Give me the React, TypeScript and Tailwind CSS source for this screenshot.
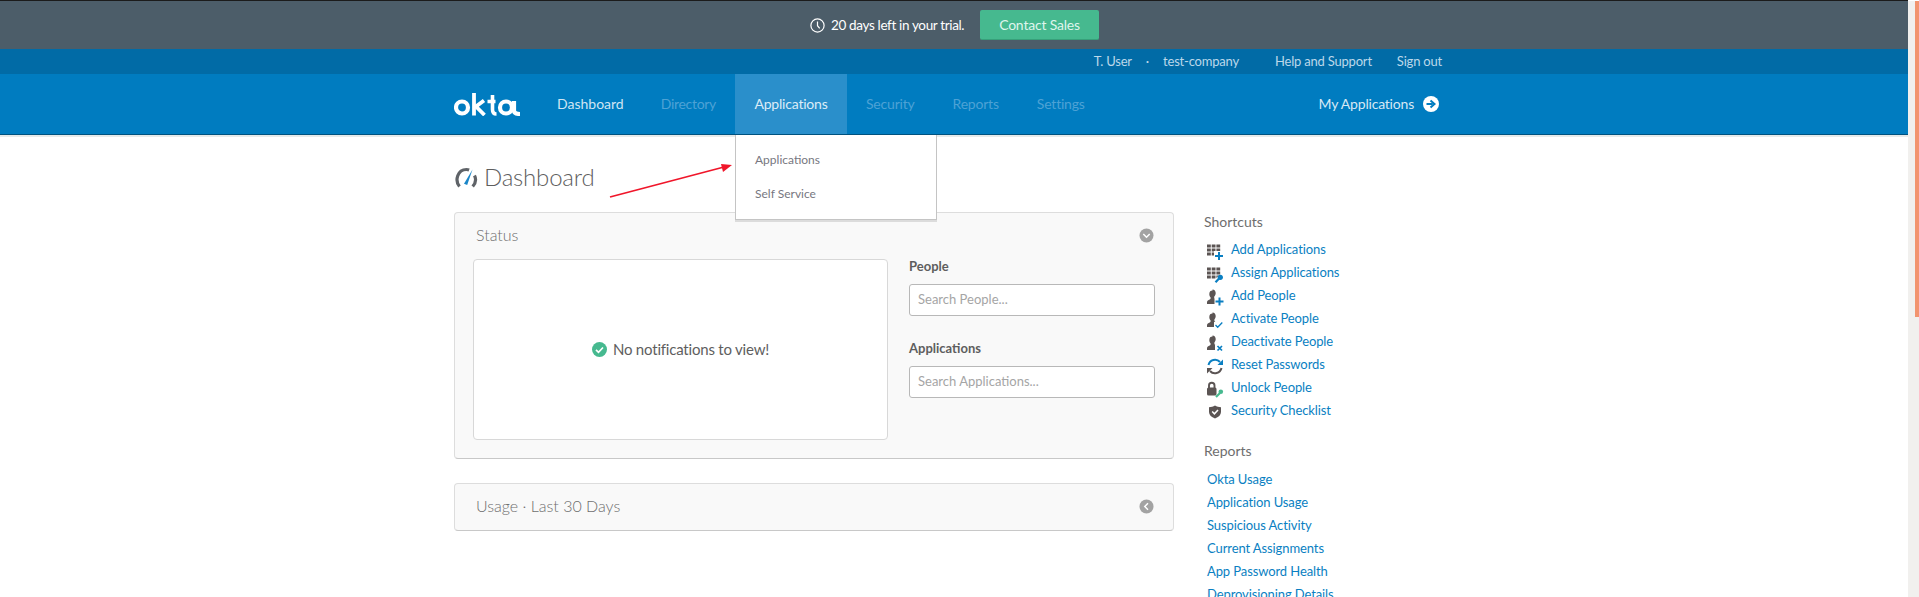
import React from "react";

const font = { fontFamily: '"Lato", "Open Sans", sans-serif' };
const blue = "#0a7fc2";
const dark = "#5b5453";

function Grid() {
  const cells = [];
  for (let r = 0; r < 3; r++) for (let c = 0; c < 3; c++) {
    cells.push(<rect key={r + "-" + c} x={2 + c * 4.7} y={5.5 + r * 4} width={3.8} height={3} fill={dark} />);
  }
  return <>{cells}</>;
}

function Person() {
  return (
    <path d="M7.500 4.500c2 0 3.200 1.500 3.200 3.600 0 1.500-.6 2.600-1.300 3.400v1.200c0 .8.8 1.200 2.600 1.900v4.400H2v-1.800c0-1.600 1.400-2.200 2.700-2.800.6-.3.9-.6.9-1.100v-.7c-.8-.9-1.300-2.100-1.300-3.500 0-2.500 1.300-3.600 3.200-3.600z" fill={dark} />
  );
}

function Plus({ cx, cy }: { cx: number; cy: number }) {
  return (
    <>
      <rect x={cx - 5} y={cy - 5} width={10} height={10} fill="#fff" />
      <rect x={cx - 1} y={cy - 4} width={2} height={8} fill={blue} />
      <rect x={cx - 4} y={cy - 1} width={8} height={2} fill={blue} />
    </>
  );
}

const shortcutIcons: Record<string, React.ReactNode> = {
  add: (<><Grid /><Plus cx={14} cy={17} /></>),
  assign: (
    <>
      <Grid />
      <path d="M9.500 21l-.2-3 5-5 6 4-4 4z" fill="#fff" />
      <path d="M10.500 20.200l4.300-4.500" stroke={blue} strokeWidth="2.200" />
      <circle cx="15.300" cy="15.300" r="2.600" fill={blue} />
    </>
  ),
  addp: (<><Person /><Plus cx={14.500} cy={16.500} /></>),
  activate: (<><Person /><path d="M9 14h10v7H9z" fill="#fff" /><path d="M10.500 17l2.200 2.300 4.600-4.800" stroke={blue} strokeWidth="1.300" fill="none" /></>),
  deactivate: (<><Person /><path d="M10 14h9v7h-9z" fill="#fff" /><path d="M12.500 15l4.500 4.500M17 15l-4.500 4.500" stroke={blue} strokeWidth="1.700" fill="none" /></>),
  reset: (
    <>
      <path d="M3.500 11a6.700 6.700 0 0 1 11.500-3" stroke={blue} strokeWidth="2" fill="none" />
      <path d="M18 5.500v5.500h-5.500z" fill={blue} />
      <path d="M16.500 14a6.700 6.700 0 0 1-11.500 3" stroke={dark} strokeWidth="2" fill="none" />
      <path d="M2 19.500V14h5.500z" fill={dark} />
    </>
  ),
  unlock: (
    <>
      <path d="M4 11V8.500a2.600 2.600 0 0 1 5.500 0V11" stroke={dark} strokeWidth="1.900" fill="none" />
      <rect x="2" y="10.500" width="9.500" height="8" rx="1.500" fill={dark} />
      <path d="M11 20l4-4" stroke="#46b98f" strokeWidth="2.200" />
      <circle cx="15.800" cy="14.800" r="2.300" fill="#46b98f" />
    </>
  ),
  shield: (
    <>
      <path d="M10 5.500c1.800 1.100 3.800 1.600 6 1.700v4.800c0 3-2.500 5.200-6 6.500-3.500-1.300-6-3.500-6-6.500V7.200c2.200-.1 4.200-.6 6-1.700z" fill={dark} />
      <path d="M7.200 11.500l2.200 2.300 3.600-3.800" stroke="#fff" strokeWidth="1.500" fill="none" />
    </>
  ),
};

const shortcuts: [string, string][] = [
  ["add", "Add Applications"],
  ["assign", "Assign Applications"],
  ["addp", "Add People"],
  ["activate", "Activate People"],
  ["deactivate", "Deactivate People"],
  ["reset", "Reset Passwords"],
  ["unlock", "Unlock People"],
  ["shield", "Security Checklist"],
];

const reports = [
  "Okta Usage",
  "Application Usage",
  "Suspicious Activity",
  "Current Assignments",
  "App Password Health",
  "Deprovisioning Details",
];

function Okta() {
  return (
    <svg width="66" height="23" viewBox="0 0 66 23" fill="none" stroke="#fff" strokeWidth="4.200">
      <circle cx="8" cy="14.500" r="6" />
      <path d="M20 0v22.500" strokeWidth="3.800" />
      <path d="M30 7.500l-8 6 8.500 8.500" strokeWidth="3.800" />
      <path d="M38.500 2v14.500c0 3.500 1.500 4.500 4 4.500M33.500 8.500h8" strokeWidth="3.600" />
      <circle cx="52" cy="14.500" r="6" />
      <path d="M60 8v9.500c0 2.700 2 3.500 6 3.500" />
    </svg>
  );
}

function Chevron({ dir }: { dir: "down" | "left" }) {
  return (
    <svg width="15" height="15" viewBox="0 0 15 15">
      <circle cx="7.500" cy="7.500" r="7" fill="#a3a3a3" />
      <path d={dir === "down" ? "M4.300 6l3.200 3.200L10.700 6" : "M9 4.300L5.800 7.500 9 10.700"} stroke="#fff" strokeWidth="1.500" fill="none" />
    </svg>
  );
}

export default function App() {
  return (
    <div className="flex h-[597px] w-full overflow-hidden bg-white" style={font}>
      <div className="min-w-0 flex-1">
        {/* Trial banner */}
        <div className="flex h-[49px] items-center justify-center border-t border-t-[#1b1b1b] bg-[#4c5d69] pl-[1px]">
          <svg width="15" height="15" viewBox="0 0 15 15" fill="none" stroke="#fff" strokeWidth="1.200" className="mt-[1px]">
            <circle cx="7.500" cy="7.500" r="6.600" />
            <path d="M7.500 3.500v4.200l2.200 2.600" />
          </svg>
          <span className="ml-[6px] w-[133px] whitespace-nowrap text-[13.500px] tracking-[-0.35px] text-white">20 days left in your trial.</span>
          <button className="ml-[16px] h-[30px] w-[119px] rounded-[2px] border-b border-b-[#37a07a] bg-[#46b98f] text-[14px] tracking-[-0.2px] text-[#dff5ec]">
            Contact Sales
          </button>
        </div>

        {/* Utility bar */}
        <div className="h-[25px] bg-[#016ba6]">
          <div className="mx-auto flex h-full w-[1000px] items-center justify-end pr-[12px] text-[13px] tracking-[-0.2px] text-[#bcd8ea]">
            <span>T. User</span>
            <span className="mx-[14px]">·</span>
            <span>test-company</span>
            <span className="ml-[36px]">Help and Support</span>
            <span className="ml-[25px]">Sign out</span>
          </div>
        </div>

        {/* Main nav */}
        <div className="h-[61px] border-b border-b-[#00527f] bg-[#007cc0]">
          <div className="mx-auto flex h-[60px] w-[1000px] items-center">
            <Okta />
            <nav className="ml-[18px] flex h-full items-stretch text-[14px] tracking-[-0.2px]">
              <a className="flex items-center pb-[1px] pl-[19px] pr-[18px] tracking-normal text-[#cfe5f3]">Dashboard</a>
              <a className="flex items-center px-[19px] pb-[1px] tracking-[-0.3px] text-[#4da2d5]">Directory</a>
              <a className="relative flex w-[112px] items-center justify-center bg-[#2a8fcb] pb-[1px] text-[#dcecf7]">
                Applications
                <div className="absolute left-0 top-[61px] z-20 h-[85px] w-[202px] border border-t-0 border-[#c4c4c4] bg-white pl-[19px] pt-[17px] text-[12px] leading-[16px] tracking-normal text-[#77777f] shadow-[0_2px_0_#dcdcdc]">
                  <div>Applications</div>
                  <div className="mt-[18px]">Self Service</div>
                </div>
              </a>
              <a className="flex items-center px-[19px] pb-[1px] text-[#4da2d5]">Security</a>
              <a className="flex items-center px-[19px] pb-[1px] text-[#4da2d5]">Reports</a>
              <a className="flex items-center px-[19px] pb-[1px] text-[#4da2d5]">Settings</a>
            </nav>
            <div className="ml-auto flex items-center pb-[1px] pr-[15px] text-[14px] tracking-[-0.2px] text-[#d6e8f4]">
              <span>My Applications</span>
              <svg width="16" height="16" viewBox="0 0 16 16" className="ml-[9px]">
                <circle cx="8" cy="8" r="8" fill="#fff" />
                <path d="M3.500 8h6M7.500 4.500L11.500 8l-4 3.500" stroke="#007cc0" strokeWidth="2" fill="none" />
              </svg>
            </div>
          </div>
        </div>
        <div className="h-[2px] bg-[#e6eaea]" />

        {/* Body */}
        <div className="relative mx-auto w-[1000px]">
          <svg width="130" height="40" viewBox="0 0 130 40" className="absolute left-[152px] top-[24px] z-30">
            <path d="M4 36L118 6" stroke="#f0162a" strokeWidth="1.800" />
            <path d="M126 4l-11-1 2 8z" fill="#f0162a" />
          </svg>

          <div className="flex h-[55px] items-end gap-[6px]">
            <svg width="24" height="24" viewBox="0 0 24 24" fill="none" className="mb-[2px]">
              <path d="M5.500 20.500C.5 14.500 3.500 3.500 12.500 3.500c.9 0 1.800.1 2.600.4" stroke="#5f6368" strokeWidth="3.200" />
              <path d="M18.700 20.500c3-3.400 3.400-7.800 1.800-11" stroke="#5f6368" strokeWidth="3.200" />
              <path d="M18.500 3.500L13.200 19l-3.200-1.200z" fill="#1a86c8" />
            </svg>
            <h1 className="text-[24px] font-light leading-[30px] tracking-[-0.2px] text-[#5e5e5e]">Dashboard</h1>
          </div>

          <div className="mt-[20px] flex gap-[30px]">
            {/* Left column */}
            <div className="w-[720px] shrink-0">
              <section className="h-[247px] rounded-[4px] border border-[#dddddd] border-b-[#c8c8c8] bg-[#f9f9f9] pl-[18px] pr-[14px]">
                <div className="flex h-[46px] items-center justify-between pb-[2px] pl-[3px] pr-[5px]">
                  <h2 className="text-[16px] font-light text-[#6e6e6e]">Status</h2>
                  <Chevron dir="down" />
                </div>
                <div className="flex">
                  <div className="flex h-[181px] w-[415px] items-center justify-center gap-[6px] rounded-[4px] border border-[#d8d8d8] bg-white">
                    <svg width="15" height="15" viewBox="0 0 15 15">
                      <circle cx="7.500" cy="7.500" r="7.500" fill="#46b98f" />
                      <path d="M4 7.800l2.500 2.500L11 5.500" stroke="#fff" strokeWidth="1.700" fill="none" />
                    </svg>
                    <span className="text-[15px] tracking-[-0.2px] text-[#5e5e5e]">No notifications to view!</span>
                  </div>
                  <div className="ml-[21px] w-[246px]">
                    <label className="block text-[13px] font-bold leading-[15px] text-[#5e5e5e]">People</label>
                    <div className="mt-[10px] flex h-[32px] items-center rounded-[3px] border border-[#b8b8b8] bg-white pl-[8px] text-[13px] text-[#a5a5a5]">Search People...</div>
                    <label className="mt-[25px] block text-[13px] font-bold leading-[15px] text-[#5e5e5e]">Applications</label>
                    <div className="mt-[10px] flex h-[32px] items-center rounded-[3px] border border-[#b8b8b8] bg-white pl-[8px] text-[13px] text-[#a5a5a5]">Search Applications...</div>
                  </div>
                </div>
              </section>

              <section className="mt-[24px] flex h-[48px] items-center justify-between rounded-[4px] border border-[#dddddd] border-b-[#c8c8c8] bg-[#f9f9f9] pb-[2px] pl-[21px] pr-[19px]">
                <h2 className="text-[16px] font-light text-[#6e6e6e]">Usage · Last 30 Days</h2>
                <Chevron dir="left" />
              </section>
            </div>

            {/* Sidebar */}
            <aside className="flex-1">
              <h3 className="text-[14px] leading-[20px] text-[#6e6e6e]">Shortcuts</h3>
              <ul className="mt-[6px]">
                {shortcuts.map(([icon, label]) => (
                  <li key={label} className="flex h-[23px] items-center">
                    <svg width="20" height="22" viewBox="0 0 20 22" className="ml-[1px] shrink-0">
                      {shortcutIcons[icon]}
                    </svg>
                    <a className="ml-[6px] text-[13px] tracking-[-0.1px] text-[#0a7fc2]">{label}</a>
                  </li>
                ))}
              </ul>
              <h3 className="mt-[19px] text-[14px] leading-[20px] text-[#6e6e6e]">Reports</h3>
              <ul className="mt-[7px] pl-[3px]">
                {reports.map((r) => (
                  <li key={r} className="flex h-[23px] items-center text-[13px] tracking-[-0.1px] text-[#0a7fc2]">{r}</li>
                ))}
              </ul>
            </aside>
          </div>
        </div>
      </div>

      {/* Scrollbar */}
      <div className="mt-[1px] flex w-[11px] shrink-0 justify-end bg-[#f1f0ee]">
        <div className="h-[316px] w-[4px] bg-[#f2946f]" />
      </div>
    </div>
  );
}
